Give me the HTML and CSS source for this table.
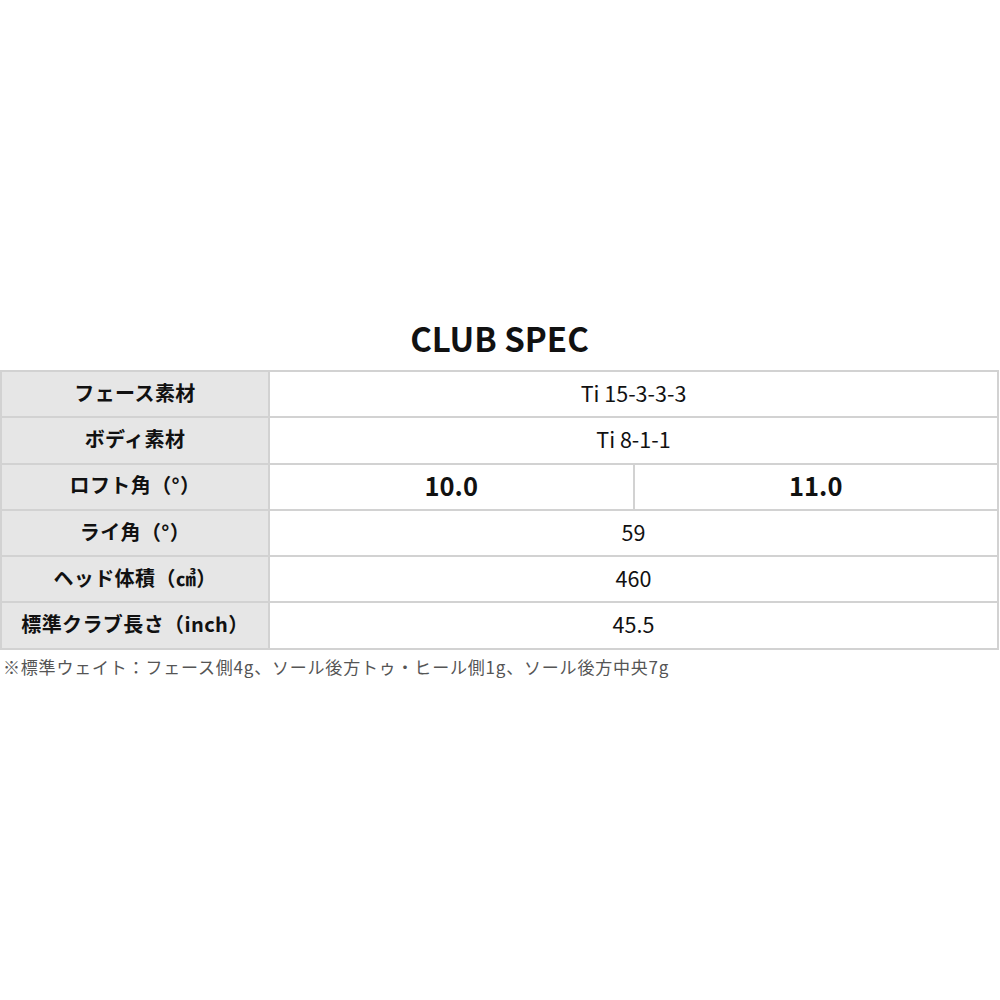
FILE: index.html
```html
<!DOCTYPE html>
<html lang="ja">
<head>
<meta charset="utf-8">
<link rel="stylesheet" href="styles.css">
</head>
<body>
<div class="page">
  <h1 class="title">CLUB SPEC</h1>
  <table class="spec">
    <colgroup><col class="c-head"><col class="c-val"><col class="c-val"></colgroup>
    <tr><th>フェース素材</th><td colspan="2">Ti 15-3-3-3</td></tr>
    <tr><th>ボディ素材</th><td colspan="2">Ti 8-1-1</td></tr>
    <tr><th>ロフト角（°）</th><td class="big">10.0</td><td class="big">11.0</td></tr>
    <tr><th>ライ角（°）</th><td colspan="2">59</td></tr>
    <tr><th>ヘッド体積（㎤）</th><td colspan="2">460</td></tr>
    <tr><th>標準クラブ長さ（inch）</th><td colspan="2">45.5</td></tr>
  </table>
  <p class="note">※標準ウェイト：フェース側4g、ソール後方トゥ・ヒール側1g、ソール後方中央7g</p>
</div>
</body>
</html>
```
FILE: styles.css
```css
html, body { margin: 0; padding: 0; background: #fff; }
body { font-family: "Noto Sans CJK JP", "Noto Sans", sans-serif; color: #111; }
.page { padding-top: 314px; width: 999px; }
.title { margin: 0 0 8px; text-align: center; font-size: 33px; font-weight: 700; line-height: 48px; letter-spacing: 0; }
.spec { width: 999px; border-collapse: collapse; table-layout: fixed; }
.c-head { width: 268px; }
.spec th, .spec td { border: 2px solid #d2d2d2; height: 46.3px; padding: 0 0 3px; box-sizing: border-box; text-align: center; vertical-align: middle; line-height: 1; }
.spec th { background: #e6e6e6; font-size: 20px; font-weight: 700; letter-spacing: 0.4px; }
.spec td { font-size: 21.5px; font-weight: 400; }
.spec td.big { font-size: 25.5px; font-weight: 700; }
.note { margin: 5px 0 0 3px; font-size: 17px; line-height: 24px; color: #555; letter-spacing: 0.8px; }
```
